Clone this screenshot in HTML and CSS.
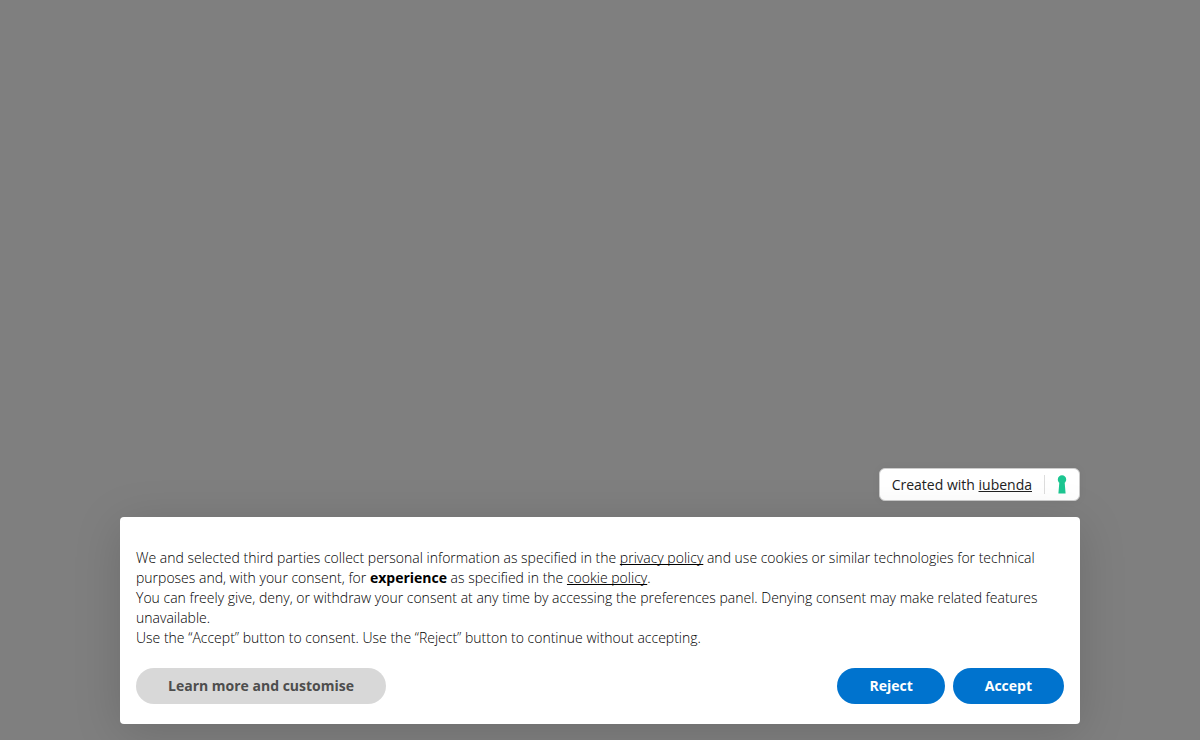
FILE: index.html
```html
<!DOCTYPE html>
<html lang="en">
<head>
<meta charset="utf-8">
<meta name="viewport" content="width=device-width, initial-scale=1">
<title>Cookie consent</title>
<link rel="stylesheet" href="styles.css">
</head>
<body>
<div class="overlay">
  <div class="consent">
    <div class="badge">
      <span class="badge-text">Created with <a href="#iubenda">iubenda</a></span>
      <span class="badge-logo">
        <svg width="10" height="19" viewBox="0 0 10 19" aria-hidden="true"><path fill="#1cc691" d="M5 0.3a4.2 4.2 0 0 1 4.2 4.2c0 1.4-.6 2.5-1.5 3.3L8.6 18.4H1.4L2.3 7.8C1.4 7 .8 5.9.8 4.5A4.2 4.2 0 0 1 5 .3Z"/></svg>
      </span>
    </div>
    <section class="banner" role="dialog" aria-label="Cookie notice">
      <div class="notice">
        <p>We and selected third parties collect personal information as specified in the <a href="#privacy">privacy policy</a> and use cookies or similar technologies for technical purposes and, with your consent, for <strong>experience</strong> as specified in the <a href="#cookies">cookie policy</a>.</p>
        <p>You can freely give, deny, or withdraw your consent at any time by accessing the preferences panel. Denying consent may make related features unavailable.</p>
        <p>Use the “Accept” button to consent. Use the “Reject” button to continue without accepting.</p>
      </div>
      <div class="actions">
        <button class="btn btn-muted" type="button">Learn more and customise</button>
        <div class="choices">
          <button class="btn btn-primary" type="button">Reject</button>
          <button class="btn btn-primary" type="button">Accept</button>
        </div>
      </div>
    </section>
  </div>
</div>
</body>
</html>
```

FILE: styles.css
```css
* {
  box-sizing: border-box;
}

body {
  margin: 0;
  font-family: "Segoe UI", "Open Sans", "Noto Sans", sans-serif;
  font-size: 14px;
  line-height: 20px;
  color: #000;
  background: #fff;
}

a {
  color: inherit;
  text-underline-offset: 1px;
  text-decoration-skip-ink: none;
}

.overlay {
  min-height: 100vh;
  padding: 16px;
  display: flex;
  align-items: flex-end;
  justify-content: center;
  background: #7f7f7f;
}

.consent {
  width: 100%;
  max-width: 960px;
  display: flex;
  flex-direction: column;
  align-items: flex-end;
  gap: 16px;
}

.badge {
  display: flex;
  align-items: center;
  padding: 6px 12px;
  border: 1px solid #ccc;
  border-radius: 6px;
  background: #fff;
  color: #222;
  box-shadow: 0 0 8px rgba(0, 0, 0, 0.05);
}

.badge-text {
  line-height: 19px;
}

.badge-logo {
  display: flex;
  margin-left: 12px;
  padding-left: 12px;
  border-left: 1px solid #ddd;
}

.banner {
  width: 100%;
  padding: 31px 16px 20px;
  border-radius: 4px;
  background: #fff;
  box-shadow: 0 8px 48px rgba(0, 0, 0, 0.15);
}

.notice {
  font-weight: 300;
}

.notice p {
  margin: 0;
}

.notice strong {
  font-weight: 700;
}

.actions {
  display: flex;
  flex-wrap: wrap;
  justify-content: space-between;
  gap: 8px;
  margin-top: 20px;
}

.choices {
  display: flex;
  gap: 8px;
}

.btn {
  height: 36px;
  padding: 0 32px;
  border: 0;
  border-radius: 18px;
  font: inherit;
  font-weight: 700;
  cursor: pointer;
}

.btn-muted {
  background: #d8d8d8;
  color: #4d4d4d;
}

.btn-primary {
  background: #0073ce;
  color: #fff;
}
```
